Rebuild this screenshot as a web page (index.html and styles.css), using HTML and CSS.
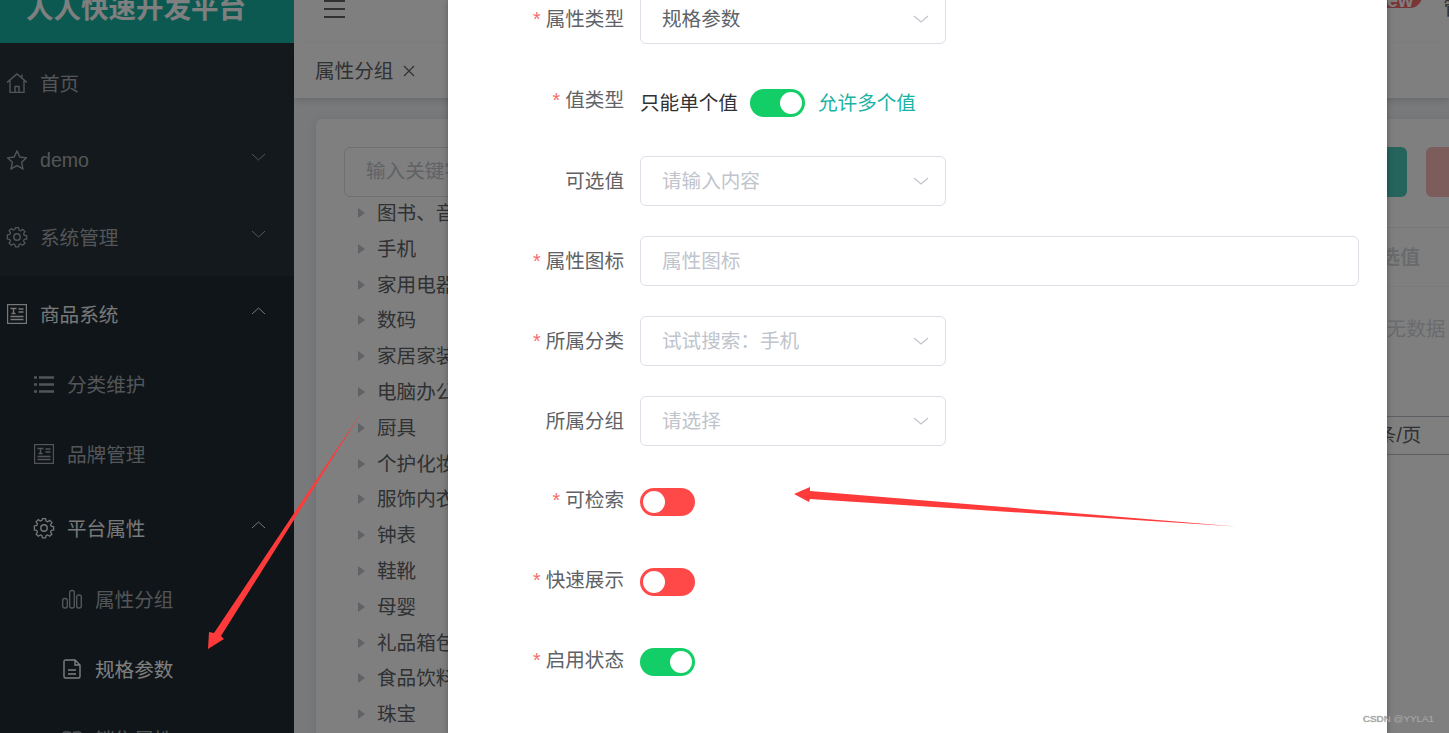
FILE: index.html
```html
<!DOCTYPE html>
<html lang="zh-CN">
<head>
<meta charset="UTF-8">
<title>人人快速开发平台</title>
<link rel="stylesheet" href="styles.css">
</head>
<body>

<svg class="defs" width="0" height="0">
  <symbol id="i-gear" viewBox="0 0 22 22"><path d="M9.300 1.200h3.400l.6 2.700 1.700.7 2.300-1.500 2.400 2.400-1.500 2.300.7 1.700 2.700.6v3.400l-2.700.6-.7 1.700 1.500 2.300-2.400 2.400-2.300-1.500-1.700.7-.6 2.700H9.300l-.6-2.700-1.700-.7-2.300 1.500-2.400-2.400 1.500-2.300-.7-1.700-2.700-.6V9.200l2.700-.6.7-1.700-1.500-2.300 2.400-2.400L7 3.700l1.700-.7z" transform="translate(1 .600) scale(.91)"/><circle cx="11" cy="11" r="3.200"/></symbol>
  <symbol id="i-news" viewBox="0 0 20 20"><rect x=".5" y=".5" width="19" height="19"/><path d="M3.500 4.500h6M6.500 4.500v5M4.500 9.500h4M11.500 5h5M11.500 8h5M3.500 12.500h13M3.500 15.500h13"/></symbol>
</svg>

<div class="app">

  <aside class="sidebar">
    <div class="logo"><span>人人快速开发平台</span></div>
    <nav class="menu">
      <a class="item top">
        <svg class="icon" viewBox="0 0 20 20"><path d="M0 9.500 10 1l10 8.500M3 7.500V19.500h14V7.500M8 19.500v-6h4v6M15 4V1.500"/></svg>
        <span>首页</span>
      </a>
      <a class="item top">
        <svg class="icon" viewBox="0 0 20 20"><path d="M10 1l2.800 6 6.700.8-4.900 4.500 1.300 6.600L10 15.600l-5.900 3.300 1.300-6.600L.5 7.800 7.200 7z"/></svg>
        <span class="latin">demo</span>
        <svg class="chev" viewBox="0 0 15 8"><path d="M1 1l6.500 6L14 1"/></svg>
      </a>
      <a class="item top">
        <svg class="icon gear"><use href="#i-gear"/></svg>
        <span>系统管理</span>
        <svg class="chev" viewBox="0 0 15 8"><path d="M1 1l6.500 6L14 1"/></svg>
      </a>
      <div class="group">
        <a class="item top open">
          <svg class="icon"><use href="#i-news"/></svg>
          <span>商品系统</span>
          <svg class="chev" viewBox="0 0 15 8"><path d="M1 7l6.500-6L14 7"/></svg>
        </a>
        <a class="item sub first">
          <svg class="icon" viewBox="0 0 20 20"><path class="thick" d="M0 2.500h3M5 2.500h15M0 9.500h3M5 9.500h15M0 16.500h3M5 16.500h15"/></svg>
          <span>分类维护</span>
        </a>
        <a class="item sub">
          <svg class="icon"><use href="#i-news"/></svg>
          <span>品牌管理</span>
        </a>
        <a class="item sub parent open">
          <svg class="icon gear"><use href="#i-gear"/></svg>
          <span>平台属性</span>
          <svg class="chev" viewBox="0 0 15 8"><path d="M1 7l6.500-6L14 7"/></svg>
        </a>
        <a class="item leaf">
          <svg class="icon" viewBox="0 0 20 20"><rect x=".7" y="9.500" width="4.600" height="9.500" rx="2"/><rect x="7.700" y="1.500" width="4.600" height="17.500" rx="2"/><rect x="14.700" y="6" width="4.600" height="13" rx="2"/></svg>
          <span>属性分组</span>
        </a>
        <a class="item leaf active">
          <svg class="icon" viewBox="0 0 20 20"><path d="M4 1h9l5 5v11.500a1.500 1.500 0 0 1-1.500 1.500h-13A1.500 1.500 0 0 1 2 17.500v-15A1.500 1.500 0 0 1 4 1zM13 1v5h5M6 11h8M6 15h8"/></svg>
          <span>规格参数</span>
        </a>
        <a class="item leaf">
          <svg class="icon" viewBox="0 0 20 20"><rect x="1" y="3" width="8" height="8" rx="2"/><rect x="11" y="3" width="8" height="8" rx="2"/><rect x="1" y="13" width="8" height="6" rx="2"/></svg>
          <span>销售属性</span>
        </a>
      </div>
    </nav>
  </aside>

  <main class="main">
    <div class="topbar">
      <div class="burger"><i></i><i></i><i></i></div>
      <div class="topright">
        <span class="badge">new</span>
        <span class="user">管理员</span>
      </div>
    </div>
    <div class="tabs">
      <span>属性分组</span>
      <svg class="tab-x" viewBox="0 0 12 12"><path d="M1 1l10 10M11 1L1 11"/></svg>
    </div>
    <div class="content">
      <div class="card">
        <div class="tree-col">
          <div class="search">输入关键字</div>
          <ul class="tree">
            <li>图书、音像、电子书刊</li>
            <li>手机</li>
            <li>家用电器</li>
            <li>数码</li>
            <li>家居家装</li>
            <li>电脑办公</li>
            <li>厨具</li>
            <li>个护化妆</li>
            <li>服饰内衣</li>
            <li>钟表</li>
            <li>鞋靴</li>
            <li>母婴</li>
            <li>礼品箱包</li>
            <li>食品饮料</li>
            <li>珠宝</li>
          </ul>
        </div>
        <div class="table-col">
          <div class="toolbar">
            <span class="btn teal"></span>
            <span class="btn pink"></span>
          </div>
          <div class="thead"><span>可选值</span></div>
          <div class="tbody"><span>暂无数据</span></div>
          <div class="pager"><span>10条/页</span></div>
        </div>
      </div>
    </div>
  </main>

  <div class="mask"></div>

  <div class="dialog">
    <form class="form">
      <div class="row">
        <label class="req">属性类型</label>
        <div class="field"><span>规格参数</span><svg class="arrow" viewBox="0 0 16 8"><path d="M1 1l7 6 7-6"/></svg></div>
      </div>
      <div class="row switches tall">
        <label class="req">值类型</label>
        <span class="opt">只能单个值</span>
        <span class="switch on"></span>
        <span class="opt chosen">允许多个值</span>
      </div>
      <div class="row">
        <label>可选值</label>
        <div class="field empty"><span>请输入内容</span><svg class="arrow" viewBox="0 0 16 8"><path d="M1 1l7 6 7-6"/></svg></div>
      </div>
      <div class="row">
        <label class="req">属性图标</label>
        <div class="field empty wide"><span>属性图标</span></div>
      </div>
      <div class="row">
        <label class="req">所属分类</label>
        <div class="field empty"><span>试试搜索：手机</span><svg class="arrow" viewBox="0 0 16 8"><path d="M1 1l7 6 7-6"/></svg></div>
      </div>
      <div class="row">
        <label>所属分组</label>
        <div class="field empty"><span>请选择</span><svg class="arrow" viewBox="0 0 16 8"><path d="M1 1l7 6 7-6"/></svg></div>
      </div>
      <div class="row switches">
        <label class="req">可检索</label>
        <span class="switch"></span>
      </div>
      <div class="row switches">
        <label class="req">快速展示</label>
        <span class="switch"></span>
      </div>
      <div class="row switches">
        <label class="req">启用状态</label>
        <span class="switch on"></span>
      </div>
    </form>
  </div>

  <!-- red arrows drawn on top of the screenshot -->
  <svg class="marks" viewBox="0 0 1449 733">
    <polygon points="363,410 221,636 224,639 208,649 209,632 214,633"/>
    <polygon points="1236,526.500 810,499 809,502 794,494 810,487 810,491"/>
  </svg>

  <div class="watermark">CSDN @YYLA1</div>
</div>

</body>
</html>
```

FILE: styles.css
```css
* {
    box-sizing: border-box;
}

body {
    margin: 0;
    font-family: "Liberation Sans", "Noto Sans CJK SC", sans-serif;
    font-size: 19.6px;
    color: #606266;
    background: #fff;
}

.defs {
    display: none;
}

.app {
    position: relative;
    display: flex;
    width: 1449px;
    height: 733px;
    overflow: hidden;
}

/* sidebar */
.sidebar {
    width: 294px;
    flex-shrink: 0;
    background: #263238;
}

.logo {
    height: 43px;
    background: #17b3a3;
    display: flex;
    align-items: flex-end;
    padding: 0 0 14px 26px;
    overflow: hidden;
}

.logo span {
    font-size: 27.5px;
    line-height: 40px;
    font-weight: bold;
    color: #fff;
    white-space: nowrap;
}

.menu {
    padding-top: 1.5px;
}

.item {
    display: flex;
    align-items: center;
    color: #a8abb0;
    white-space: nowrap;
}

.item span {
    margin-top: -2px;
}

.item span.latin {
    margin-top: 0;
}

.icon {
    width: 20px;
    height: 20px;
    flex-shrink: 0;
    margin-right: 13px;
    fill: none;
    stroke: currentColor;
    stroke-width: 1.4;
}

.icon.gear {
    width: 22px;
    height: 22px;
    margin-left: -1px;
    margin-right: 12px;
}

.icon .thick {
    stroke-width: 2.6;
}

.chev {
    width: 15px;
    height: 8px;
    margin-left: auto;
    margin-right: 28px;
    margin-top: -6px;
    fill: none;
    stroke: currentColor;
    stroke-width: 1;
}

.top {
    height: 77px;
    padding-left: 7px;
}

.sub {
    height: 69.5px;
    padding-left: 34px;
}

.sub.first {
    margin-top: -2.5px;
}

.sub.parent {
    height: 75px;
    padding-top: 3px;
}

.leaf {
    height: 70px;
    padding-left: 62px;
}

.group {
    background: #1f2a30;
    min-height: 460px;
}

.item.open {
    color: #f0f0f0;
}

.item.active {
    color: #fff;
}

/* main area behind the dialog */
.main {
    flex: 1;
    min-width: 0;
    background: #f1f3f7;
}

.topbar {
    height: 43px;
    background: #fff;
    display: flex;
    justify-content: space-between;
    padding-left: 30px;
    overflow: hidden;
}

.burger {
    width: 21px;
    display: flex;
    flex-direction: column;
    gap: 6px;
}

.burger i {
    height: 2px;
    background: #606266;
}

.topright {
    display: flex;
    align-items: flex-start;
    gap: 21px;
    margin-right: -53px;
}

.badge {
    height: 24px;
    padding: 0 9px;
    margin-top: -16px;
    line-height: 32px;
    border-radius: 0 0 12px 12px;
    background: #f56c6c;
    color: #fff;
    font-weight: bold;
}

.user {
    line-height: 16px;
    color: #606266;
}

.tabs {
    height: 55px;
    background: #fff;
    box-shadow: 0 3px 6px rgba(0, 0, 0, .12);
    display: flex;
    align-items: center;
    padding-left: 21px;
    position: relative;
}

.tabs span {
    margin-top: -3px;
}

.tab-x {
    width: 12px;
    height: 12px;
    margin-left: 10px;
    fill: none;
    stroke: #606266;
    stroke-width: 1.2;
}

.content {
    padding: 21px 0 0 22px;
}

.card {
    width: 1300px;
    height: 700px;
    background: #fff;
    border-radius: 6px;
    box-shadow: 0 2px 12px rgba(0, 0, 0, .1);
    padding-top: 28px;
    display: flex;
}

.tree-col {
    width: 684px;
    padding-left: 28px;
}

.search {
    width: 300px;
    height: 50px;
    line-height: 46px;
    padding-left: 21px;
    border: 1px solid #dcdfe6;
    border-radius: 6px;
    color: #c0c4cc;
}

.tree {
    list-style: none;
    margin: -1px 0 0;
    padding: 0;
}

.tree li {
    position: relative;
    height: 35.8px;
    line-height: 35.8px;
    padding-left: 33px;
    white-space: nowrap;
}

.tree li::before {
    content: "";
    position: absolute;
    left: 14px;
    top: 12px;
    border-left: 7px solid #c0c4cc;
    border-top: 5.500px solid transparent;
    border-bottom: 5.500px solid transparent;
}

.table-col {
    flex: 1;
    min-width: 0;
}

.toolbar {
    height: 50px;
    display: flex;
    gap: 19px;
    padding-left: 300px;
}

.btn {
    width: 107px;
    height: 50px;
    flex-shrink: 0;
    border-radius: 6px;
}

.btn.teal {
    background: #49c9ba;
}

.btn.pink {
    background: #fab8b8;
}

.thead {
    margin-top: 30px;
    height: 60px;
    line-height: 59px;
    border-top: 1px solid #ebeef5;
    border-bottom: 1px solid #f5f6f8;
    padding-left: 361px;
    font-weight: bold;
    color: #d4d6db;
    white-space: nowrap;
}

.tbody {
    height: 129px;
    padding: 26px 0 0 367px;
    color: #d4d6db;
    white-space: nowrap;
}

.pager {
    height: 39px;
    line-height: 37px;
    border-top: 1px solid #b8bac4;
    border-bottom: 1px solid #b8bac4;
    padding-left: 355px;
    white-space: nowrap;
}

/* dialog */
.mask {
    position: absolute;
    inset: 0;
    background: rgba(0, 0, 0, .5);
}

.dialog {
    position: absolute;
    left: 448px;
    top: 0;
    width: 939px;
    height: 733px;
    background: #fff;
    box-shadow: 0 1px 6px rgba(0, 0, 0, .3);
    overflow: hidden;
}

.form {
    margin-top: -6px;
    padding-right: 28px;
}

.row {
    display: flex;
    align-items: center;
    height: 50px;
    margin-bottom: 30px;
}

.row label {
    width: 176px;
    flex-shrink: 0;
    margin-right: 16px;
    margin-top: -1px;
    text-align: right;
    white-space: nowrap;
    line-height: 50px;
}

.req::before {
    content: "*";
    color: #f56c6c;
    margin-right: 5px;
}

.field {
    width: 306px;
    height: 50px;
    display: flex;
    align-items: center;
    justify-content: space-between;
    padding: 0 16px 0 21px;
    border: 1px solid #dcdfe6;
    border-radius: 6px;
    color: #606266;
}

.field span {
    margin-top: -3px;
}

.field.empty {
    color: #c0c4cc;
}

.field.wide {
    flex: 1;
}

.arrow {
    width: 16px;
    height: 8px;
    fill: none;
    stroke: #c0c4cc;
    stroke-width: 1.2;
}

.switches {
    padding-top: 2px;
}

.switches label {
    margin-top: -4px;
}

.switches.tall {
    height: 52px;
    padding-top: 5px;
}

.switches.tall label {
    margin-top: -5px;
}

.opt {
    margin-top: -3px;
    color: #303133;
    white-space: nowrap;
}

.opt.chosen {
    color: #17b3a3;
}

.switches .switch {
    margin: 0 13px 0 12px;
}

.switches label + .switch {
    margin-left: 0;
}

.switch {
    position: relative;
    width: 55px;
    height: 28px;
    flex-shrink: 0;
    border-radius: 14px;
    background: #ff4949;
}

.switch::after {
    content: "";
    position: absolute;
    left: 3px;
    top: 3px;
    width: 22px;
    height: 22px;
    border-radius: 50%;
    background: #fff;
}

.switch.on {
    background: #13ce66;
}

.switch.on::after {
    left: 30px;
}

/* overlays */
.marks {
    position: absolute;
    left: 0;
    top: 0;
    width: 1449px;
    height: 733px;
    fill: #ff3a3a;
    pointer-events: none;
}

.watermark {
    position: absolute;
    left: 1363px;
    top: 712px;
    font-size: 9.8px;
    line-height: 13px;
    color: #a8a8a8;
    text-shadow: 0 0 1px #888;
}
```
